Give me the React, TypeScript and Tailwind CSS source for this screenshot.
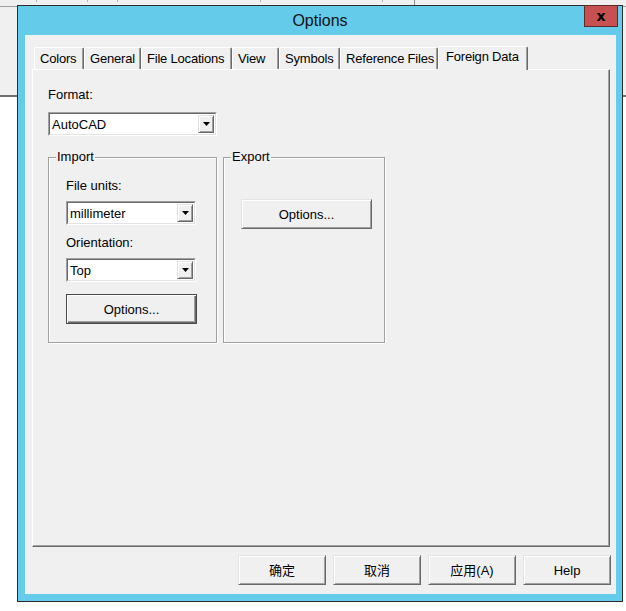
import React from "react";

const ui = "font-['Liberation_Sans',Arial,'Noto_Sans_CJK_SC',sans-serif]";

function Arrow() {
  return (
    <svg width="7" height="4" viewBox="0 0 7 4" className="block">
      <path d="M0 0h7L3.5 4z" fill="#000" />
    </svg>
  );
}

function Combo({ value, widthClass }: { value: string; widthClass: string }) {
  return (
    <div
      className={`${widthClass} flex h-[24px] border border-t-[#a0a0a0] border-l-[#a0a0a0] border-r-white border-b-white`}
    >
      <div className="flex flex-1 items-stretch border border-t-[#696969] border-l-[#696969] border-r-[#e3e3e3] border-b-[#e3e3e3] bg-white">
        <span className="flex flex-1 items-center pl-[2px] text-[13px] leading-none text-black">
          {value}
        </span>
        <div className="m-px flex w-[16px] items-center justify-center border border-t-[#e3e3e3] border-l-[#e3e3e3] border-r-[#696969] border-b-[#696969] bg-[#f0f0f0] shadow-[inset_1px_1px_0_#fff,inset_-1px_-1px_0_#a0a0a0]">
          <Arrow />
        </div>
      </div>
    </div>
  );
}

function Button({
  label,
  widthClass,
  isDefault = false,
}: {
  label: string;
  widthClass: string;
  isDefault?: boolean;
}) {
  const frame = isDefault
    ? "border border-[#4a4a4a] shadow-[inset_1px_1px_0_#fff,inset_-1px_-1px_0_#696969,inset_-2px_-2px_0_#a0a0a0]"
    : "border border-t-[#e3e3e3] border-l-[#e3e3e3] border-r-[#696969] border-b-[#696969] shadow-[inset_1px_1px_0_#fff,inset_-1px_-1px_0_#a0a0a0]";
  return (
    <button
      className={`${widthClass} ${frame} flex h-[30px] items-center justify-center bg-[#f0f0f0] text-[13px] leading-none text-black`}
    >
      {label}
    </button>
  );
}

function Tab({
  label,
  widthClass,
  active = false,
}: {
  label: string;
  widthClass: string;
  active?: boolean;
}) {
  if (active) {
    return (
      <div
        className={`${widthClass} relative z-10 -mb-px flex h-[24px] items-center whitespace-nowrap rounded-t-[2px] border-t border-l border-white border-r border-r-[#696969] bg-[#f0f0f0] pb-[4px] pl-[7px] text-[13px] leading-none tracking-[-0.2px] text-black shadow-[inset_-1px_0_0_#a0a0a0]`}
      >
        {label}
      </div>
    );
  }
  return (
    <div
      className={`${widthClass} flex h-[22px] items-center overflow-hidden whitespace-nowrap rounded-t-[2px] border-t border-l border-white border-r border-r-[#696969] bg-[#f0f0f0] pl-[5px] text-[13px] leading-none tracking-[-0.2px] text-black shadow-[inset_-1px_0_0_#a0a0a0]`}
    >
      {label}
    </div>
  );
}

function GroupBox({
  title,
  widthClass,
  children,
  padClass,
}: {
  title: string;
  widthClass: string;
  children?: React.ReactNode;
  padClass: string;
}) {
  return (
    <div
      className={`${widthClass} ${padClass} relative h-[186px] border border-[#a0a0a0] shadow-[inset_1px_1px_0_#fff,1px_1px_0_#fff]`}
    >
      <span className="absolute left-[7px] top-[-9px] bg-[#f0f0f0] px-[1px] text-[13px] leading-[16px] text-black">
        {title}
      </span>
      {children}
    </div>
  );
}

export default function App() {
  return (
    <div className={`${ui} relative h-[611px] w-[626px] overflow-hidden bg-white`}>
      {/* host window behind the dialog */}
      <div className="h-[97px] border-b-2 border-[#6e6e6e] bg-[#f0f0f0]">
        <div className="flex h-[7px] items-start border-b border-[#a0a0a0]">
          <div className="h-[2px] w-[37px] border-r border-[#b4b4b4]" />
          <div className="h-[2px] w-[51px] border-r border-[#b4b4b4]" />
          <div className="h-[2px] w-[30px] border-r border-[#b4b4b4]" />
          <div className="h-[2px] w-[143px] border-r border-[#b4b4b4]" />
          <div className="h-[2px] w-[122px] border-r border-[#b4b4b4]" />
          <div className="h-[6px] w-[32px] border-r border-[#8c8c8c]" />
        </div>
      </div>

      {/* dialog window */}
      <div className="absolute left-[17px] top-[5px] flex h-[597px] w-[606px] flex-col border border-[#2e2e2e] bg-[#65cbea]">
        <div className="flex h-[29px] items-center justify-center text-[16px] leading-none text-[#111]">
          Options
        </div>
        <div className="absolute right-[4px] top-[-1px] flex h-[22px] w-[34px] items-center justify-center border border-[#5e2a2a] bg-[#c75050]">
          <span className="font-['DejaVu_Sans',sans-serif] text-[14px] font-bold leading-none text-black">
            x
          </span>
        </div>

        <div className="mb-[7px] ml-[7px] mr-[6px] flex flex-1 flex-col bg-[#f0f0f0]">
          {/* tabs */}
          <div className="ml-[9px] mt-[12px] flex h-[22px] items-end">
            <Tab label="Colors" widthClass="w-[50px]" />
            <Tab label="General" widthClass="w-[57px]" />
            <Tab label="File Locations" widthClass="w-[91px]" />
            <Tab label="View" widthClass="w-[47px]" />
            <Tab label="Symbols" widthClass="w-[61px]" />
            <Tab label="Reference Files" widthClass="w-[98px]" />
            <Tab label="Foreign Data" widthClass="w-[90px]" active />
          </div>

          {/* tab page */}
          <div className="ml-[7px] flex h-[478px] w-[578px] flex-col border border-t-white border-l-white border-r-[#696969] border-b-[#696969] pl-[15px] pt-[17px] shadow-[inset_-1px_-1px_0_#a0a0a0]">
            <div className="text-[13px] leading-[16px] text-black">Format:</div>
            <div className="mt-[9px]">
              <Combo value="AutoCAD" widthClass="w-[169px]" />
            </div>

            <div className="mt-[21px] flex gap-[6px]">
              <GroupBox title="Import" widthClass="w-[169px]" padClass="pl-[17px] pt-[20px]">
                <div className="text-[13px] leading-[16px] text-black">File units:</div>
                <div className="mt-[7px]">
                  <Combo value="millimeter" widthClass="w-[130px]" />
                </div>
                <div className="mt-[10px] text-[13px] leading-[16px] text-black">Orientation:</div>
                <div className="mt-[7px]">
                  <Combo value="Top" widthClass="w-[130px]" />
                </div>
                <div className="mt-[12px]">
                  <Button label="Options..." widthClass="w-[131px]" isDefault />
                </div>
              </GroupBox>
              <GroupBox title="Export" widthClass="w-[162px]" padClass="pl-[17px] pt-[41px]">
                <Button label="Options..." widthClass="w-[131px]" />
              </GroupBox>
            </div>
          </div>

          {/* dialog buttons */}
          <div className="mr-[5px] mt-[8px] flex justify-end gap-[7px]">
            <Button label="确定" widthClass="w-[88px]" />
            <Button label="取消" widthClass="w-[88px]" />
            <Button label="应用(A)" widthClass="w-[88px]" />
            <Button label="Help" widthClass="w-[88px]" />
          </div>
        </div>
      </div>
    </div>
  );
}
